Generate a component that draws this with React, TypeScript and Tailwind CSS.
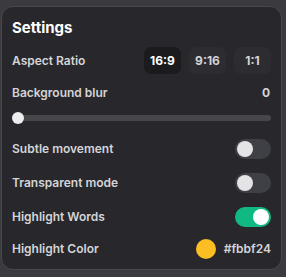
import React, { useState } from "react";

function Toggle({ on }: { on: boolean }) {
  return (
    <div
      className={`w-[36px] h-[20px] rounded-full flex items-center px-[2px] ${
        on ? "bg-[#10b981] justify-end" : "bg-[#3f3f46] justify-start"
      }`}
    >
      <div className={`w-[16px] h-[16px] rounded-full ${on ? "bg-white" : "bg-[#e4e4e7]"}`} />
    </div>
  );
}

export default function App() {
  const [ratio] = useState("16:9");
  return (
    <div
      className="w-[286px] h-[277px] bg-[#3a3a3f] pt-[6px] pl-[1px]"
      style={{ fontFamily: "Inter, 'Noto Sans', sans-serif" }}
    >
      <div className="w-[281px] h-[264px] bg-[#28282c] rounded-[12px] border border-[#48484e] px-[10px] pt-[12px]">
        <div className="text-[15px] font-bold text-white leading-[18px] mb-[10px]">Settings</div>
        <div className="flex items-center justify-between h-[27px]">
          <span className="text-[12px] font-semibold text-[#d4d4d8]">Aspect Ratio</span>
          <div className="flex gap-[8px]">
            {["16:9", "9:16", "1:1"].map((r) => (
              <div
                key={r}
                className={`w-[37px] h-[27px] rounded-[7px] flex items-center justify-center text-[12px] font-bold ${
                  r === ratio ? "bg-[#1b1b1e] text-white" : "bg-[#2d2d31] text-[#d4d4d8]"
                }`}
              >
                {r}
              </div>
            ))}
          </div>
        </div>
        <div className="flex items-center justify-between mt-[11px] h-[16px]">
          <span className="text-[12px] font-semibold text-[#d4d4d8]">Background blur</span>
          <span className="text-[12px] font-bold text-[#d4d4d8] pr-[1px]">0</span>
        </div>
        <div className="relative mt-[11px] h-[12px] flex items-center">
          <div className="w-full h-[6px] rounded-full bg-[#46464b]" />
          <div className="absolute left-0 top-0 w-[12px] h-[12px] rounded-full bg-[#ededf0]" />
        </div>
        <div className="flex flex-col mt-[15px] gap-[14px]">
          <div className="flex items-center justify-between h-[20px]">
            <span className="text-[12px] font-semibold text-[#d4d4d8]">Subtle movement</span>
            <Toggle on={false} />
          </div>
          <div className="flex items-center justify-between h-[20px]">
            <span className="text-[12px] font-semibold text-[#d4d4d8]">Transparent mode</span>
            <Toggle on={false} />
          </div>
          <div className="flex items-center justify-between h-[20px]">
            <span className="text-[12px] font-semibold text-[#d4d4d8]">Highlight Words</span>
            <Toggle on={true} />
          </div>
          <div className="flex items-center justify-between h-[20px] -mt-[2px]">
            <span className="text-[12px] font-semibold text-[#d4d4d8]">Highlight Color</span>
            <div className="flex items-center gap-[8px]">
              <div className="w-[20px] h-[20px] rounded-full bg-[#fbbf24]" />
              <span className="text-[12px] font-semibold text-[#d4d4d8]">#fbbf24</span>
            </div>
          </div>
        </div>
      </div>
    </div>
  );
}
